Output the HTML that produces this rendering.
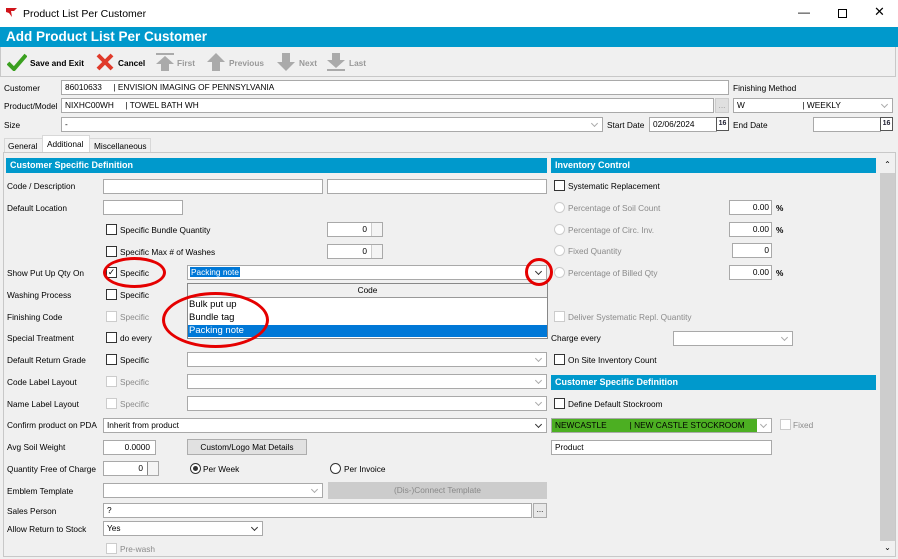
<!DOCTYPE html>
<html><head><meta charset="utf-8"><style>
*{box-sizing:border-box;margin:0;padding:0}
body{width:898px;height:559px;overflow:hidden;background:#f0f0f0;font-family:"Liberation Sans",Arial,sans-serif;font-size:8.3px;color:#000;position:relative}
.a{position:absolute}
.l{position:absolute;white-space:nowrap;line-height:12px}
.in{position:absolute;background:#fff;border:1px solid #a9a9a9;height:15px;line-height:13px;padding-left:3px;white-space:nowrap;overflow:hidden}
.cb{position:absolute;width:11px;height:11px;border:1px solid #333;background:#fff}
.cbd{border-color:#ccc}
.rd{position:absolute;width:11px;height:11px;border:1px solid #ccc;border-radius:50%;background:#fff}
.hd{position:absolute;background:#0099cc;color:#fff;font-weight:bold;font-size:9px;line-height:15px;padding-left:4px;height:15px}
.dis{color:#8a8a8a}
.dd::after{content:"";position:absolute;right:5px;top:3px;width:4px;height:4px;border-right:1px solid #aaa;border-bottom:1px solid #aaa;transform:rotate(45deg)}
.ddk::after{border-color:#333}
.sp{position:absolute;right:0;top:0;width:11px;height:13px;border-left:1px solid #ccc;background:#f4f4f4}
.cal{position:absolute;width:13px;height:14px;background:#fff;border:1px solid #555;font-size:7px;font-weight:bold;color:#223;text-align:center;line-height:12px}
.ring{position:absolute;border:3px solid #e50000;border-radius:50%}
</style></head><body>
<div class="a" style="left:0;top:0;width:898px;height:27px;background:#fff"></div>
<svg class="a" style="left:6px;top:8px" width="12" height="10"><path d="M0 0h11l-3 3h-3l1 6-3-4-3-1z" fill="#d0131a"/></svg>
<div class="l" style="left:23px;top:8px;font-size:10.5px">Product List Per Customer</div>
<div class="l" style="left:798px;top:6px;font-size:12px">—</div>
<div class="a" style="left:838px;top:9px;width:9px;height:9px;border:1px solid #000"></div>
<div class="l" style="left:874px;top:6px;font-size:13px">✕</div>
<div class="a" style="left:0;top:27px;width:898px;height:20px;background:#0099cc"></div>
<div class="l" style="left:6px;top:29px;font-size:13.5px;line-height:16px;color:#fff;font-weight:bold">Add Product List Per Customer</div>
<div class="a" style="left:0;top:47px;width:896px;height:30px;border:1px solid #c8c8c8;border-top:none"></div>
<svg class="a" style="left:7px;top:53px" width="20" height="18"><path d="M1 10l6 6L19 2" stroke="#3aa01f" stroke-width="4" fill="none"/></svg>
<div class="l" style="left:30px;top:57px;font-weight:bold">Save and Exit</div>
<svg class="a" style="left:96px;top:53px" width="18" height="18"><path d="M2 2l14 14M16 2L2 16" stroke="#e03a2a" stroke-width="4"/></svg>
<div class="l" style="left:118px;top:57px;font-weight:bold">Cancel</div>
<svg class="a" style="left:155px;top:52px" width="20" height="20"><rect x="1" y="1" width="18" height="2" fill="#aaa"/><path d="M10 4l9 8h-5v7h-8v-7h-5z" fill="#aaa"/></svg>
<div class="l" style="left:177px;top:57px;font-weight:bold;color:#999">First</div>
<svg class="a" style="left:206px;top:52px" width="20" height="20"><path d="M10 1l9 9h-5v9h-8v-9h-5z" fill="#aaa"/></svg>
<div class="l" style="left:229px;top:57px;font-weight:bold;color:#999">Previous</div>
<svg class="a" style="left:276px;top:52px" width="20" height="20"><path d="M10 19l9-9h-5v-9h-8v9h-5z" fill="#aaa"/></svg>
<div class="l" style="left:299px;top:57px;font-weight:bold;color:#999">Next</div>
<svg class="a" style="left:326px;top:52px" width="20" height="20"><path d="M10 16l9-8h-5v-7h-8v7h-5z" fill="#aaa"/><rect x="1" y="17" width="18" height="2" fill="#aaa"/></svg>
<div class="l" style="left:349px;top:57px;font-weight:bold;color:#999">Last</div>

<div class="l" style="left:4px;top:82px">Customer</div>
<div class="in" style="left:61px;top:80px;width:668px">86010633&nbsp;&nbsp;&nbsp;&nbsp;&nbsp;| ENVISION IMAGING OF PENNSYLVANIA</div>
<div class="l" style="left:733px;top:82px">Finishing Method</div>
<div class="l" style="left:4px;top:100px">Product/Model</div>
<div class="in" style="left:61px;top:98px;width:653px">NIXHC00WH&nbsp;&nbsp;&nbsp;&nbsp;&nbsp;| TOWEL BATH WH</div>
<div class="a" style="left:715px;top:98px;width:14px;height:15px;background:#e0e0e0;border:1px solid #ccc;color:#999;text-align:center;line-height:12px">...</div>
<div class="in dd" style="left:733px;top:98px;width:160px">W&nbsp;&nbsp;&nbsp;&nbsp;&nbsp;&nbsp;&nbsp;&nbsp;&nbsp;&nbsp;&nbsp;&nbsp;&nbsp;&nbsp;&nbsp;&nbsp;&nbsp;&nbsp;&nbsp;&nbsp;&nbsp;&nbsp;&nbsp;&nbsp;&nbsp;| WEEKLY</div>
<div class="l" style="left:4px;top:119px">Size</div>
<div class="in dd" style="left:61px;top:117px;width:542px">-</div>
<div class="l" style="left:607px;top:119px">Start Date</div>
<div class="in" style="left:649px;top:117px;width:68px">02/06/2024</div>
<div class="cal" style="left:716px;top:117px">16</div>
<div class="l" style="left:733px;top:119px">End Date</div>
<div class="in" style="left:813px;top:117px;width:68px"></div>
<div class="cal" style="left:880px;top:117px">16</div>

<div class="a" style="left:4px;top:138px;width:39px;height:15px;border:1px solid #d8d8d8;border-bottom:none"></div>
<div class="l" style="left:8px;top:140px">General</div>
<div class="a" style="left:42px;top:135px;width:48px;height:18px;border:1px solid #d8d8d8;border-bottom:none;background:#fff"></div>
<div class="l" style="left:47px;top:138px">Additional</div>
<div class="a" style="left:89px;top:138px;width:62px;height:15px;border:1px solid #d8d8d8;border-bottom:none"></div>
<div class="l" style="left:94px;top:140px">Miscellaneous</div>
<div class="a" style="left:3px;top:152px;width:893px;height:405px;border:1px solid #c8c8c8;background:#f0f0f0"></div>
<div class="a" style="left:880px;top:157px;width:15px;height:399px;background:#cdcdcd"></div>
<div class="a" style="left:880px;top:157px;width:15px;height:16px;background:#f0f0f0;text-align:center;font-size:8px;line-height:16px">⌃</div>
<div class="a" style="left:880px;top:541px;width:15px;height:15px;background:#f0f0f0;text-align:center;font-size:8px;line-height:14px">⌄</div>

<div class="hd" style="left:6px;top:158px;width:541px">Customer Specific Definition</div>
<div class="hd" style="left:551px;top:158px;width:325px">Inventory Control</div>

<div class="l" style="left:7px;top:180px">Code / Description</div>
<div class="in" style="left:103px;top:179px;width:220px"></div>
<div class="in" style="left:327px;top:179px;width:220px"></div>
<div class="l" style="left:7px;top:202px">Default Location</div>
<div class="in" style="left:103px;top:200px;width:80px"></div>
<div class="cb" style="left:106px;top:224px"></div><div class="l" style="left:120px;top:224px">Specific Bundle Quantity</div>
<div class="in" style="left:327px;top:222px;width:56px;text-align:right;padding-right:15px">0<div class="sp"></div></div>
<div class="cb" style="left:106px;top:246px"></div><div class="l" style="left:120px;top:246px">Specific Max # of Washes</div>
<div class="in" style="left:327px;top:244px;width:56px;text-align:right;padding-right:15px">0<div class="sp"></div></div>
<div class="l" style="left:7px;top:267px">Show Put Up Qty On</div>
<div class="cb" style="left:106px;top:267px;text-align:center;line-height:9px;font-size:9px">✓</div><div class="l" style="left:120px;top:267px">Specific</div>
<div class="in dd ddk" style="left:187px;top:265px;width:360px;padding-left:2px"><span style="background:#0078d7;color:#fff;padding:0 1px">Packing note</span></div>
<div class="a" style="left:187px;top:283px;width:361px;height:56px;background:#fff;border:1px solid #888"></div>
<div class="a" style="left:188px;top:284px;width:359px;height:14px;background:#f0f0f0;border-bottom:1px solid #999;text-align:center;line-height:13px">Code</div>
<div class="l" style="left:189px;top:299px;font-size:9.5px">Bulk put up</div>
<div class="l" style="left:189px;top:312px;font-size:9.5px">Bundle tag</div>
<div class="a" style="left:188px;top:325px;width:359px;height:12px;background:#0078d7"></div>
<div class="l" style="left:189px;top:325px;font-size:9.5px;color:#fff">Packing note</div>

<div class="l" style="left:7px;top:289px">Washing Process</div>
<div class="cb" style="left:106px;top:289px"></div><div class="l" style="left:120px;top:289px">Specific</div>
<div class="l" style="left:7px;top:311px">Finishing Code</div>
<div class="cb cbd" style="left:106px;top:311px"></div><div class="l dis" style="left:120px;top:311px">Specific</div>
<div class="l" style="left:7px;top:332px">Special Treatment</div>
<div class="cb" style="left:106px;top:332px"></div><div class="l" style="left:120px;top:332px">do every</div>
<div class="l" style="left:7px;top:354px">Default Return Grade</div>
<div class="cb" style="left:106px;top:354px"></div><div class="l" style="left:120px;top:354px">Specific</div>
<div class="in dd" style="left:187px;top:352px;width:360px"></div>
<div class="l" style="left:7px;top:376px">Code Label Layout</div>
<div class="cb cbd" style="left:106px;top:376px"></div><div class="l dis" style="left:120px;top:376px">Specific</div>
<div class="in dd" style="left:187px;top:374px;width:360px"></div>
<div class="l" style="left:7px;top:398px">Name Label Layout</div>
<div class="cb cbd" style="left:106px;top:398px"></div><div class="l dis" style="left:120px;top:398px">Specific</div>
<div class="in dd" style="left:187px;top:396px;width:360px"></div>
<div class="l" style="left:7px;top:419px">Confirm product on PDA</div>
<div class="in dd ddk" style="left:103px;top:418px;width:444px">Inherit from product</div>
<div class="l" style="left:7px;top:441px">Avg Soil Weight</div>
<div class="in" style="left:103px;top:440px;width:53px;text-align:right;padding-right:5px">0.0000</div>
<div class="a" style="left:187px;top:439px;width:120px;height:16px;background:#e1e1e1;border:1px solid #adadad;text-align:center;line-height:14px">Custom/Logo Mat Details</div>
<div class="l" style="left:7px;top:463px">Quantity Free of Charge</div>
<div class="in" style="left:103px;top:461px;width:56px;text-align:right;padding-right:15px">0<div class="sp" style="border-color:#888"></div></div>
<div class="rd" style="left:190px;top:463px;border-color:#333;text-align:center"><div style="width:5px;height:5px;background:#333;border-radius:50%;margin:2px auto"></div></div><div class="l" style="left:203px;top:463px">Per Week</div>
<div class="rd" style="left:330px;top:463px;border-color:#333"></div><div class="l" style="left:344px;top:463px">Per Invoice</div>
<div class="l" style="left:7px;top:485px">Emblem Template</div>
<div class="in dd" style="left:103px;top:483px;width:220px"></div>
<div class="a" style="left:328px;top:482px;width:219px;height:17px;background:#cccccc;text-align:center;line-height:16px;color:#888">(Dis-)Connect Template</div>
<div class="l" style="left:7px;top:505px">Sales Person</div>
<div class="in" style="left:103px;top:503px;width:429px">?</div>
<div class="a" style="left:533px;top:503px;width:14px;height:15px;background:#e8e8e8;border:1px solid #aaa;text-align:center;line-height:12px;font-size:8px">...</div>
<div class="l" style="left:7px;top:523px">Allow Return to Stock</div>
<div class="in dd ddk" style="left:103px;top:521px;width:160px">Yes</div>
<div class="cb cbd" style="left:106px;top:543px"></div><div class="l dis" style="left:120px;top:543px">Pre-wash</div>

<div class="cb" style="left:554px;top:180px"></div><div class="l" style="left:568px;top:180px">Systematic Replacement</div>
<div class="rd" style="left:554px;top:202px"></div><div class="l dis" style="left:568px;top:202px">Percentage of Soil Count</div>
<div class="in" style="left:729px;top:200px;width:43px;text-align:right;padding-right:2px">0.00</div><div class="l" style="left:776px;top:202px;font-weight:bold">%</div>
<div class="rd" style="left:554px;top:224px"></div><div class="l dis" style="left:568px;top:224px">Percentage of Circ. Inv.</div>
<div class="in" style="left:729px;top:222px;width:43px;text-align:right;padding-right:2px">0.00</div><div class="l" style="left:776px;top:224px;font-weight:bold">%</div>
<div class="rd" style="left:554px;top:245px"></div><div class="l dis" style="left:568px;top:245px">Fixed Quantity</div>
<div class="in" style="left:732px;top:243px;width:40px;text-align:right;padding-right:2px">0</div>
<div class="rd" style="left:554px;top:267px"></div><div class="l dis" style="left:568px;top:267px">Percentage of Billed Qty</div>
<div class="in" style="left:729px;top:265px;width:43px;text-align:right;padding-right:2px">0.00</div><div class="l" style="left:776px;top:267px;font-weight:bold">%</div>
<div class="cb cbd" style="left:554px;top:311px"></div><div class="l dis" style="left:568px;top:311px">Deliver Systematic Repl. Quantity</div>
<div class="l" style="left:551px;top:332px">Charge every</div>
<div class="in dd" style="left:673px;top:331px;width:120px"></div>
<div class="cb" style="left:554px;top:354px"></div><div class="l" style="left:568px;top:354px">On Site Inventory Count</div>
<div class="hd" style="left:551px;top:375px;width:325px">Customer Specific Definition</div>
<div class="cb" style="left:554px;top:398px"></div><div class="l" style="left:568px;top:398px">Define Default Stockroom</div>
<div class="in dd" style="left:551px;top:418px;width:221px;background:#4caf22;border-color:#aaa">NEWCASTLE&nbsp;&nbsp;&nbsp;&nbsp;&nbsp;&nbsp;&nbsp;&nbsp;&nbsp;&nbsp;| NEW CASTLE STOCKROOM<div style="position:absolute;right:0;top:0;width:14px;height:13px;background:#fff"></div></div>
<div class="cb cbd" style="left:780px;top:419px"></div><div class="l dis" style="left:793px;top:419px">Fixed</div>
<div class="in" style="left:551px;top:440px;width:221px">Product</div>

<div class="ring" style="left:103px;top:257px;width:63px;height:31px"></div>
<div class="ring" style="left:525px;top:258px;width:28px;height:28px"></div>
<div class="ring" style="left:162px;top:292px;width:107px;height:56px"></div>
</body></html>
